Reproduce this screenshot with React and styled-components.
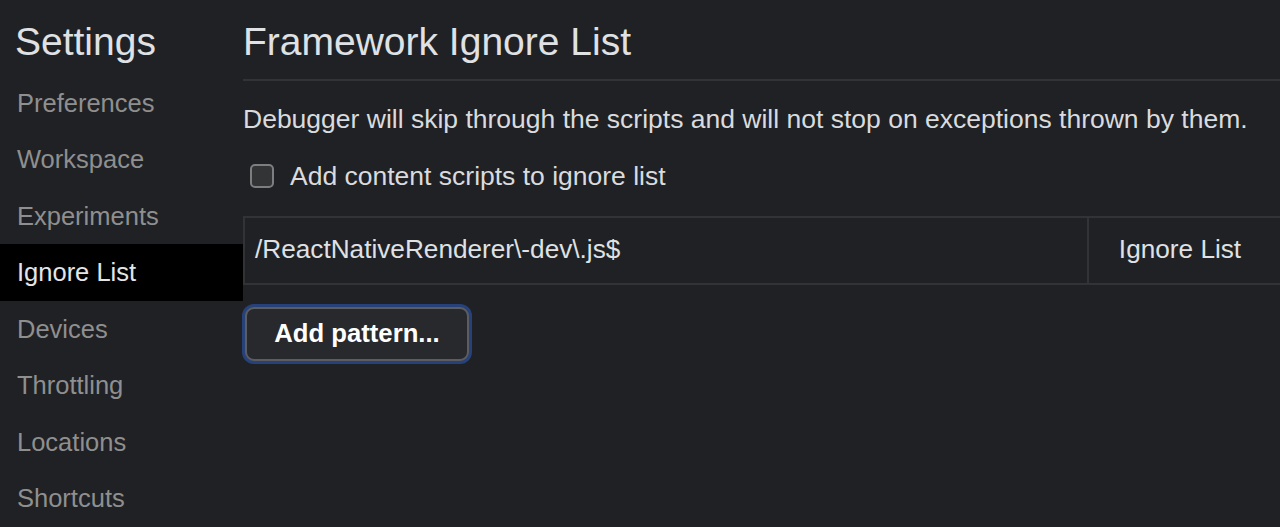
import React from 'react'
import styled, { createGlobalStyle } from 'styled-components'

const GlobalStyle = createGlobalStyle`
  html, body {
    margin: 0;
    padding: 0;
    background: #202124;
    font-family: "Liberation Sans", Arial, sans-serif;
  }
`

const Page = styled.div`
  display: flex;
  width: 1280px;
  height: 527px;
  overflow: hidden;
  background: #202124;
`

const Sidebar = styled.nav`
  display: flex;
  flex-direction: column;
  width: 243px;
  flex-shrink: 0;
`

const SidebarTitle = styled.h1`
  margin: 0;
  height: 75px;
  padding: 9px 0 0 15px;
  display: flex;
  align-items: center;
  box-sizing: border-box;
  font-size: 39px;
  font-weight: 400;
  color: #dfe1e5;
`

const NavItem = styled.div`
  height: 56.7px;
  display: flex;
  align-items: center;
  padding-left: 17px;
  font-size: 25.5px;
  color: ${(p) => (p.$active ? '#e3e5e8' : '#8f8f8f')};
  background: ${(p) => (p.$active ? '#000000' : 'transparent')};
`

const Main = styled.main`
  flex: 1;
  display: flex;
  flex-direction: column;
  min-width: 0;
`

const Header = styled.h2`
  margin: 0;
  height: 81px;
  display: flex;
  align-items: center;
  padding-top: 5px;
  box-sizing: border-box;
  font-size: 39px;
  font-weight: 400;
  color: #dfe1e5;
  border-bottom: 2px solid #323336;
`

const Description = styled.p`
  margin: 0;
  height: 77px;
  display: flex;
  align-items: center;
  box-sizing: border-box;
  font-size: 26.5px;
  color: #d9dbdf;
  white-space: nowrap;
`

const CheckRow = styled.label`
  display: flex;
  align-items: center;
  gap: 16px;
  height: 36px;
  padding-left: 7px;
  font-size: 26.5px;
  color: #d9dbdf;
`

const Checkbox = styled.span`
  width: 20px;
  height: 20px;
  border: 2px solid #7d7e80;
  border-radius: 5px;
  background: #333436;
`

const Table = styled.div`
  display: grid;
  grid-template-columns: 842px 1fr;
  height: 69px;
  margin-top: 22px;
  box-sizing: border-box;
  border: 2px solid #323336;
  border-right: none;
`

const Cell = styled.div`
  display: flex;
  align-items: center;
  justify-content: ${(p) => (p.$center ? 'center' : 'flex-start')};
  padding: ${(p) => (p.$center ? '0 9px 2px 0' : '0 0 2px 10px')};
  font-size: 26.2px;
  color: #dfe1e5;
  border-left: ${(p) => (p.$center ? '2px solid #323336' : 'none')};
`

const ButtonRow = styled.div`
  padding-top: 22px;
  padding-left: 2px;
`

const Button = styled.button`
  width: 224px;
  height: 54px;
  box-sizing: border-box;
  border: 2px solid #5c5d60;
  border-radius: 9px;
  background: #28292c;
  box-shadow: 0 0 0 3px #27427a;
  font-family: "Liberation Sans", Arial, sans-serif;
  font-size: 25.7px;
  font-weight: 700;
  color: #ffffff;
  padding: 0 0 2px;
`

const items = [
  'Preferences',
  'Workspace',
  'Experiments',
  'Ignore List',
  'Devices',
  'Throttling',
  'Locations',
  'Shortcuts',
]

export default function App() {
  return (
    <>
      <GlobalStyle />
      <Page>
        <Sidebar>
          <SidebarTitle>Settings</SidebarTitle>
          {items.map((item) => (
            <NavItem key={item} $active={item === 'Ignore List'}>
              {item}
            </NavItem>
          ))}
        </Sidebar>
        <Main>
          <Header>Framework Ignore List</Header>
          <Description>
            Debugger will skip through the scripts and will not stop on exceptions thrown by them.
          </Description>
          <CheckRow>
            <Checkbox />
            Add content scripts to ignore list
          </CheckRow>
          <Table>
            <Cell>/ReactNativeRenderer\-dev\.js$</Cell>
            <Cell $center>Ignore List</Cell>
          </Table>
          <ButtonRow>
            <Button>Add pattern...</Button>
          </ButtonRow>
        </Main>
      </Page>
    </>
  )
}
